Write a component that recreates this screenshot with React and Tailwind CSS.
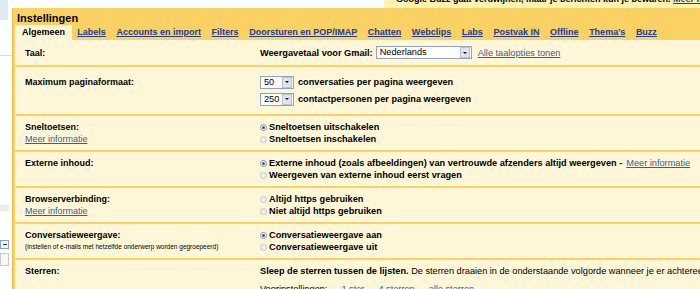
import React from 'react';

function Radio({ checked }) {
  return checked ? (
    <span className="w-[7px] h-[7px] rounded-full border border-[#8391a6] bg-white flex items-center justify-center shrink-0">
      <span className="w-[3px] h-[3px] rounded-full bg-[#33538f]" />
    </span>
  ) : (
    <span className="w-[7px] h-[7px] rounded-full border border-[#bfc5cd] bg-[#f1f1f1] shrink-0" />
  );
}

function Option({ checked, children }) {
  return (
    <div className="flex items-center gap-[2px] h-[12px] font-bold whitespace-nowrap">
      <Radio checked={checked} />
      <span>{children}</span>
    </div>
  );
}

function Select({ value, width }) {
  return (
    <div className={`flex items-center h-[13px] border border-[#8ea4c1] bg-white ${width}`}>
      <span className="flex-1 pl-[3px] font-normal leading-[11px]">{value}</span>
      <span className="w-[10px] h-[11px] mr-[1px] bg-[#dfe4ee] border border-[#b7c2d4] flex items-center justify-center">
        <span className="w-0 h-0 border-l-[2px] border-r-[2px] border-t-[2px] border-l-transparent border-r-transparent border-t-black" />
      </span>
    </div>
  );
}

function Row({ label, info, small, children, className = '' }) {
  return (
    <div className={`flex border-b-2 border-[#fad163] ${className}`}>
      <div className="w-[245px] pl-[10px] shrink-0">
        <div className="font-bold">{label}</div>
        {info && <div className="text-[#3a5ca8] underline">Meer informatie</div>}
        {small && <div className="text-[6.5px] leading-[12px]">{small}</div>}
      </div>
      <div className="flex-1 min-w-0 text-[9.2px]">{children}</div>
    </div>
  );
}

const tabs = ['Labels', 'Accounts en import', 'Filters', 'Doorsturen en POP/IMAP', 'Chatten', 'Webclips', 'Labs', 'Postvak IN', 'Offline', "Thema's", 'Buzz'];

export default function App() {
  return (
    <div className="w-[700px] h-[289px] overflow-hidden bg-white flex font-['Liberation_Sans',Arial,sans-serif] text-[9px] leading-[12px] text-black">
      <div className="w-[12px] shrink-0 flex flex-col">
        <div className="h-[20px] w-[8px] bg-[#e1e9f5]" />
        <div className="h-[35px]" />
        <div className="h-px w-[12px] bg-[#dcdcdc]" />
        <div className="h-[149px]" />
        <div className="h-[6px] w-[9px] bg-[#ececec]" />
        <div className="h-[29px]" />
        <div className="h-[9px] w-[9px] border border-[#8aa0c4] bg-[#f4f6fa] flex items-center justify-center">
          <span className="w-[4px] h-px bg-[#333]" />
        </div>
        <div className="h-[4px]" />
        <div className="h-[13px] w-[9px] border border-[#c9c9c9] bg-[#f7f7f7]" />
      </div>

      <div className="flex-1 min-w-0 flex flex-col">
        <div className="h-[8px] flex shrink-0">
          <div className="ml-auto w-[316px] bg-[#fff3b3] overflow-hidden whitespace-nowrap">
            <div className="-mt-[7px] pl-[12px] font-bold leading-[12px]">
              Google Buzz gaat verdwijnen, maar je berichten kun je bewaren. <span className="text-[#2a3d8f] underline">Meer info</span>
            </div>
          </div>
        </div>

        <div className="flex-1 min-h-0 bg-[#fad163] border-l border-[#e8bc4c] pl-[2px] flex flex-col">
          <div className="h-[21px] pt-[4px] pl-[2px] text-[11px] leading-[13px] font-bold">Instellingen</div>
          <div className="flex items-end h-[15px] whitespace-nowrap">
            <div className="bg-[#fff7d7] px-[7px] h-[15px] leading-[15px] font-bold">Algemeen</div>
            {tabs.map((t) => (
              <a key={t} className="px-[5.3px] leading-[15px] font-bold text-[#253c8d] underline">{t}</a>
            ))}
          </div>

          <div className="flex-1 bg-[#fff7d7] flex flex-col">
            <Row label="Taal:" className="py-[6px] items-center">
              <div className="flex items-center whitespace-nowrap">
                <span className="font-bold">Weergavetaal voor Gmail:</span>
                <Select value="Nederlands" width="w-[96px] ml-[3px]" />
                <a className="ml-[6px] text-[#3a5ca8] underline">Alle taalopties tonen</a>
              </div>
            </Row>

            <Row label="Maximum paginaformaat:" className="py-[8px] leading-[14px]">
              <div className="flex flex-col gap-[3px] whitespace-nowrap">
                <div className="flex items-center h-[14px]">
                  <Select value="50" width="w-[34px]" />
                  <span className="ml-[4px] font-bold">conversaties per pagina weergeven</span>
                </div>
                <div className="flex items-center h-[14px]">
                  <Select value="250" width="w-[34px]" />
                  <span className="ml-[4px] font-bold">contactpersonen per pagina weergeven</span>
                </div>
              </div>
            </Row>

            <Row label="Sneltoetsen:" info className="py-[5px]">
              <Option checked>Sneltoetsen uitschakelen</Option>
              <Option>Sneltoetsen inschakelen</Option>
            </Row>

            <Row label="Externe inhoud:" className="py-[5px]">
              <div className="flex items-center gap-[2px] h-[12px] whitespace-nowrap">
                <Radio checked />
                <span className="font-bold">Externe inhoud (zoals afbeeldingen) van vertrouwde afzenders altijd weergeven -</span>
                <a className="ml-[2px] text-[#3a5ca8] underline">Meer informatie</a>
              </div>
              <Option>Weergeven van externe inhoud eerst vragen</Option>
            </Row>

            <Row label="Browserverbinding:" info className="py-[5px]">
              <Option>Altijd https gebruiken</Option>
              <Option>Niet altijd https gebruiken</Option>
            </Row>

            <Row label="Conversatieweergave:" small="(instellen of e-mails met hetzelfde onderwerp worden gegroepeerd)" className="py-[5px]">
              <Option checked>Conversatieweergave aan</Option>
              <Option>Conversatieweergave uit</Option>
            </Row>

            <div className="flex pt-[5px]">
              <div className="w-[245px] pl-[10px] shrink-0 font-bold">Sterren:</div>
              <div className="flex-1 min-w-0 whitespace-nowrap overflow-hidden text-[9.2px]">
                <div>
                  <span className="font-bold">Sleep de sterren tussen de lijsten.</span>
                  <span>{'  '}De sterren draaien in de onderstaande volgorde wanneer je er achtereenvolgens op klikt.</span>
                </div>
                <div className="mt-[6px] flex gap-[14px]">
                  <span>Voorinstellingen:</span>
                  <span className="text-[#3a5ca8] underline">1 ster</span>
                  <span className="text-[#3a5ca8] underline">4 sterren</span>
                  <span className="text-[#3a5ca8] underline">alle sterren</span>
                </div>
              </div>
            </div>
          </div>
        </div>
      </div>
    </div>
  );
}
